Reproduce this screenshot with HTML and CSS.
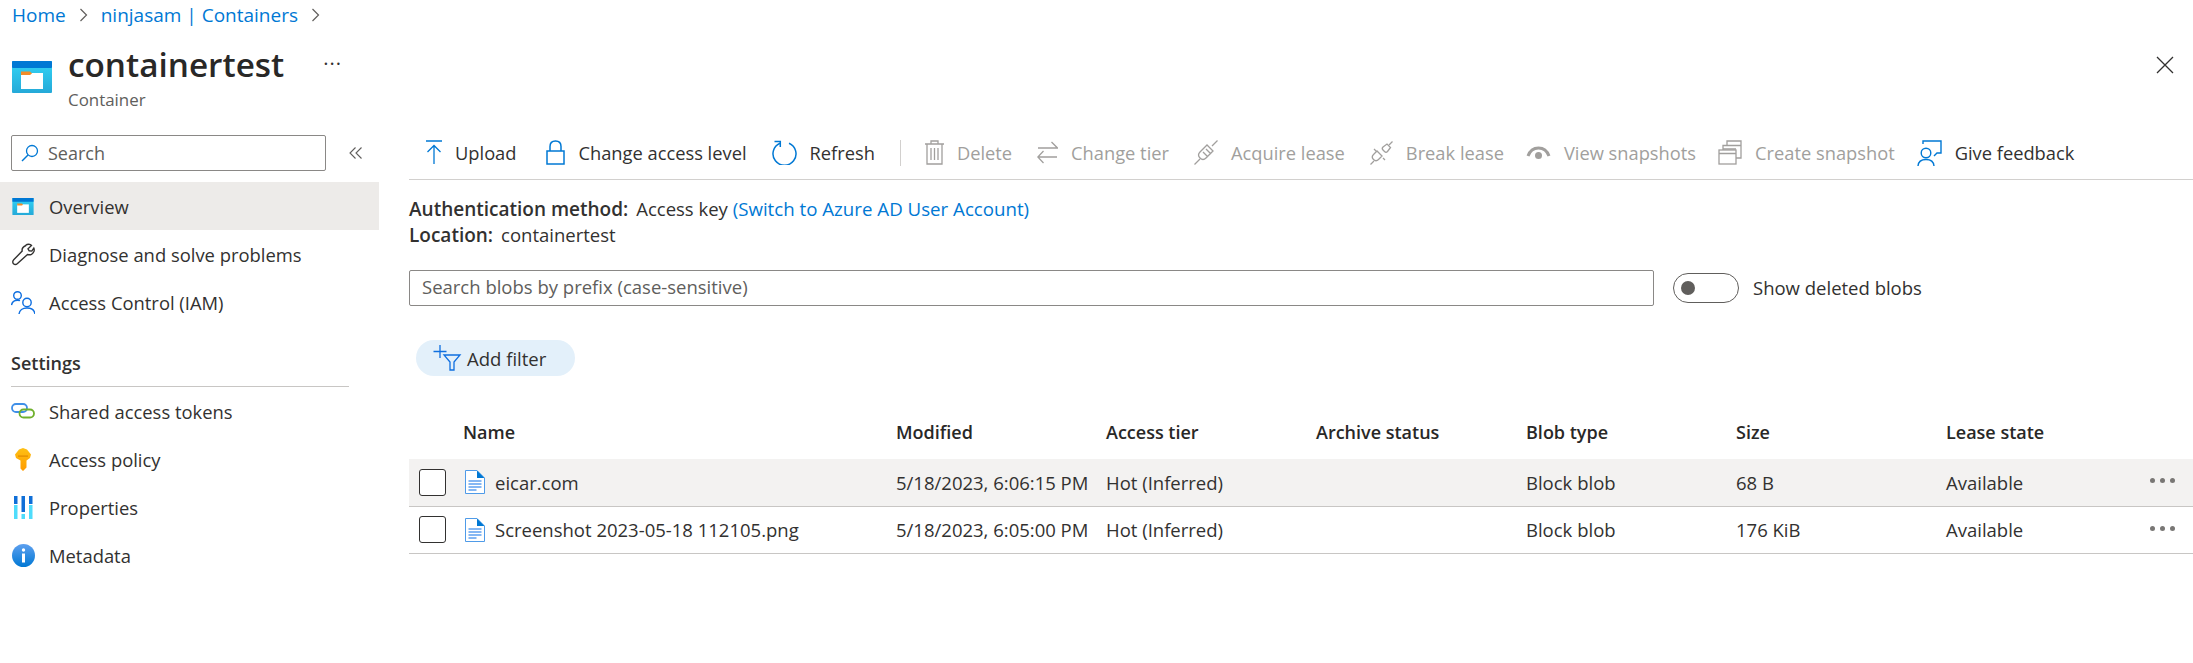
FILE: index.html
```html
<!DOCTYPE html>
<html lang="en">
  <head>
    <meta charset="utf-8" />
    <meta name="viewport" content="width=device-width, initial-scale=1" />
    <title>containertest</title>
    <link rel="stylesheet" href="styles.css">
  </head>
  <body>
    <svg class="sprite" width="0" height="0">
      <defs>
        <linearGradient id="cyan" x1="0" y1="0" x2="0" y2="1">
          <stop offset="0" stop-color="#32d4f5" />
          <stop offset="1" stop-color="#25a9d8" />
        </linearGradient>
        <linearGradient id="gold" x1="0" y1="0" x2="0" y2="1">
          <stop offset="0" stop-color="#fec014" />
          <stop offset="1" stop-color="#ff9b00" />
        </linearGradient>
        <linearGradient id="blueball" x1="0" y1="0" x2="0" y2="1">
          <stop offset="0" stop-color="#5ea0ef" />
          <stop offset="1" stop-color="#0078d4" />
        </linearGradient>
        <symbol id="i-container" viewBox="0 0 40 32">
          <rect y="0" width="40" height="32" rx="1" fill="url(#cyan)" />
          <rect y="0" width="40" height="7" rx="1" fill="#0078d4" />
          <rect x="9" y="12" width="22" height="16" fill="#fff" />
          <path d="M9 10.5h9l2 2-2 1.500H9z" fill="#f28c28" />
        </symbol>
        <symbol id="i-file" viewBox="0 0 20 24">
          <path d="M0.500 0.500H12l7.500 7.500v15.500H0.500z" fill="#fff" stroke="#4f9be8" />
          <path d="M12 0.500l7.500 7.500H12z" fill="#0078d4" />
          <path d="M3.500 11h13M3.500 14h13M3.500 17h13M3.500 20h8" stroke="#5ea0ef" stroke-width="1.300" />
        </symbol>
      </defs>
    </svg>

    <nav class="crumbs">
      <a href="#">Home</a>
      <svg class="crumb-sep" width="10" height="14" viewBox="0 0 10 14"><path d="M1.500 1l6 6-6 6" /></svg>
      <a href="#">ninjasam | Containers</a>
      <svg class="crumb-sep" width="10" height="14" viewBox="0 0 10 14"><path d="M1.500 1l6 6-6 6" /></svg>
    </nav>

    <header class="title-bar">
      <svg class="title-icon" width="40" height="32"><use href="#i-container" /></svg>
      <div class="title-text">
        <div class="title-row">
          <h1>containertest</h1>
          <span class="title-more">&middot;&middot;&middot;</span>
        </div>
        <p>Container</p>
      </div>
      <svg class="close" width="18" height="18" viewBox="0 0 18 18"><path d="M1 1l16 16M17 1L1 17" /></svg>
    </header>

    <div class="layout">
      <aside class="side">
        <div class="side-search">
          <div class="search-box">
            <svg width="18" height="18" viewBox="0 0 18 18"><circle cx="11" cy="7" r="5.500" fill="none" stroke="#0078d4" stroke-width="1.300" /><path d="M7 11l-6 6" stroke="#0078d4" stroke-width="1.500" /></svg>
            <span>Search</span>
          </div>
          <svg class="collapse" width="14" height="12" viewBox="0 0 14 12"><path d="M6.500 0.500L1 6l5.500 5.500M12.500 0.500L7 6l5.500 5.500" /></svg>
        </div>

        <a class="nav-item active" href="#">
          <span class="nav-icon"><svg width="22" height="17"><use href="#i-container" /></svg></span>Overview
        </a>
        <a class="nav-item" href="#">
          <span class="nav-icon">
            <svg width="24" height="24" viewBox="0 0 24 24" fill="none" stroke="#323130" stroke-width="1.400"><path d="M14.500 3.500c2-1.800 4.800-1.700 6 0l-3.500 3.300 1.200 2 2.600.300 2-3c1 2.200 0 5-2.300 6.200-1.500.7-2.800.6-4 .2L6.500 21.500c-1.300 1.200-3 1.200-4 .2s-1-2.700.2-3.900l8.500-8.700c-.5-2.200.5-4.300 3.800-5.600z" /></svg>
          </span>Diagnose and solve problems
        </a>
        <a class="nav-item" href="#">
          <span class="nav-icon">
            <svg width="24" height="24" viewBox="0 0 24 24" fill="none" stroke="#0f6fe0" stroke-width="1.400"><circle cx="6.500" cy="5.500" r="3.800" /><path d="M0.500 15c.6-3 2.800-4.800 6-4.800 1 0 1.800.2 2.500.5" /><circle cx="16" cy="12.500" r="4.200" /><path d="M8 24c.4-3.600 3.600-6 8-6s7.500 2.400 8 6" /></svg>
          </span>Access Control (IAM)
        </a>

        <h2 class="side-heading">Settings</h2>

        <a class="nav-item" href="#">
          <span class="nav-icon">
            <svg width="24" height="16" viewBox="0 0 24 16" fill="none" stroke-width="1.800"><rect x="1" y="1" width="15" height="8" rx="4" stroke="#3f8fe8" /><rect x="8.500" y="6.500" width="14.500" height="8" rx="4" stroke="#6fb02c" /></svg>
          </span>Shared access tokens
        </a>
        <a class="nav-item" href="#">
          <span class="nav-icon">
            <svg width="16" height="23" viewBox="0 0 16 23"><path d="M8 0l4 1.500 4 5-1 3.500-3.500 2.500v7L8 23l-2.500-2.500V12.500L1 10 0 6.500 4 1.500z" fill="url(#gold)" /><rect x="3" y="7.500" width="10" height="1.200" fill="#e08a00" /></svg>
          </span>Access policy
        </a>
        <a class="nav-item" href="#">
          <span class="nav-icon">
            <svg width="19" height="23" viewBox="0 0 19 23"><path d="M0 0h3.500v8H0zM7.500 0H11v16H7.500zM15 0h3.500v8H15z" fill="#0f6fd8" /><path d="M0 9h3.500v14H0zM7.500 18H11v5H7.500zM15 9h3.500v14H15z" fill="#4fdcfb" /></svg>
          </span>Properties
        </a>
        <a class="nav-item" href="#">
          <span class="nav-icon">
            <svg width="23" height="23" viewBox="0 0 23 23"><circle cx="11.500" cy="11.500" r="11.500" fill="url(#blueball)" /><circle cx="11.500" cy="6" r="1.700" fill="#fff" /><rect x="10" y="9.500" width="3" height="9" fill="#fff" /></svg>
          </span>Metadata
        </a>
      </aside>

      <main class="main">
        <div class="toolbar">
          <span class="tool wide">
            <svg width="16" height="25" viewBox="0 0 16 25" fill="none" stroke="#0078d4" stroke-width="1.300"><path d="M0 1h16M8 24V6M1.500 12L8 5.500l6.500 6.500" /></svg>Upload
          </span>
          <span class="tool">
            <svg width="19" height="25" viewBox="0 0 19 25" fill="none" stroke="#0078d4" stroke-width="1.500"><rect x="1" y="11" width="17" height="13" /><path d="M4 11V6.500C4 3 6.200 1 9.500 1S15 3 15 6.500V11" /></svg>Change access level
          </span>
          <span class="tool">
            <svg width="25" height="25" viewBox="0 0 25 25" fill="none" stroke="#0078d4" stroke-width="1.500"><path d="M8 3.200a11.500 11.500 0 1 0 9 0" /><path d="M2.500 1.500H8.300v5.500" /></svg>Refresh
          </span>
          <span class="tool-sep"></span>
          <span class="tool off">
            <svg width="19" height="25" viewBox="0 0 19 25" fill="none" stroke="#a19f9d" stroke-width="1.300"><path d="M0 4h19M6 4V1h7v3M2 4v20h15V4M6 8v12M9.500 8v12M13 8v12" /></svg>Delete
          </span>
          <span class="tool off">
            <svg width="21" height="23" viewBox="0 0 21 23" fill="none" stroke="#a19f9d" stroke-width="1.300"><path d="M1 7h19M14.500 1L20.500 7l-6 0M20 16H1M6.500 10L0.800 16l5.700 6" /></svg>Change tier
          </span>
          <span class="tool off">
            <svg width="24" height="25" viewBox="0 0 24 25" fill="none" stroke="#a19f9d" stroke-width="1.300"><path d="M0.500 24.500L6 19M23.500 0.500L18 6" /><path d="M6 12l7-7 6 6-7 7c-2 2-4 2-6 0s-2-4 0-6zM9 12l5 5M12 9l5 5" /></svg>Acquire lease
          </span>
          <span class="tool off tight">
            <svg width="23" height="24" viewBox="0 0 23 24" fill="none" stroke="#a19f9d" stroke-width="1.300"><path d="M0.500 23.500L4 20M22.500 0.500L19 4" /><path d="M7 10l-3.500 3.500c-1.500 1.500-1.500 3.500 0 5s3.500 1.500 5 0L12 15zM13 6l4-3 3.500 3.500-3 4c-1 1-2 1-3 0l-1.500-1.500c-1-1-1-2 0-3zM4 8l2 2M13 17l2 2" /></svg>Break lease
          </span>
          <span class="tool off tight">
            <svg width="25" height="15" viewBox="0 0 25 15"><path d="M2 11C4 5.500 8 3 12.500 3S21 5.500 23 11" fill="none" stroke="#a19f9d" stroke-width="3" /><circle cx="12.500" cy="10.500" r="3.500" fill="#a19f9d" /></svg>View snapshots
          </span>
          <span class="tool off tight">
            <svg width="24" height="25" viewBox="0 0 24 25" fill="none" stroke="#a19f9d" stroke-width="1.300"><rect x="1" y="10" width="17" height="14" /><path d="M1 13.500h17M5 10V5.500h18V18h-5M5 9h13M9 5.500V1h14v4.500" /></svg>Create snapshot
          </span>
          <span class="tool on">
            <svg width="25" height="26" viewBox="0 0 25 26" fill="none" stroke="#0078d4" stroke-width="1.400"><circle cx="9" cy="13" r="4.800" /><path d="M1 26c.3-4 3.500-6.500 8-6.500s7.700 2.500 8 6.500M6 4V1h18v12h-4l-3 3" /></svg>Give feedback
          </span>
        </div>

        <div class="info">
          <div><b>Authentication method:</b>Access key <a href="#">(Switch to Azure AD User Account)</a></div>
          <div><b>Location:</b>containertest</div>
        </div>

        <div class="search-row">
          <div class="prefix-box">Search blobs by prefix (case-sensitive)</div>
          <span class="toggle"><span class="knob"></span></span>
          <span class="toggle-label">Show deleted blobs</span>
        </div>

        <button class="add-filter">
          <svg width="30" height="26" viewBox="0 0 30 26" fill="none" stroke="#0f6fe0" stroke-width="1.300"><path d="M8 0v13M1.500 6.500h13M12 10h16l-6 7v8h-4v-8z" /></svg>
          Add filter
        </button>

        <div class="blobs">
          <div class="blob-head">
            <span></span>
            <span>Name</span>
            <span>Modified</span>
            <span>Access tier</span>
            <span>Archive status</span>
            <span>Blob type</span>
            <span>Size</span>
            <span>Lease state</span>
          </div>
          <div class="blob-row hover">
            <span class="check"></span>
            <span class="blob-name"><svg width="20" height="24"><use href="#i-file" /></svg>eicar.com</span>
            <span>5/18/2023, 6:06:15 PM</span>
            <span>Hot (Inferred)</span>
            <span></span>
            <span>Block blob</span>
            <span>68 B</span>
            <span class="last">Available<i class="dots"><em></em><em></em><em></em></i></span>
          </div>
          <div class="blob-row">
            <span class="check"></span>
            <span class="blob-name"><svg width="20" height="24"><use href="#i-file" /></svg>Screenshot 2023-05-18 112105.png</span>
            <span>5/18/2023, 6:05:00 PM</span>
            <span>Hot (Inferred)</span>
            <span></span>
            <span>Block blob</span>
            <span>176 KiB</span>
            <span class="last">Available<i class="dots"><em></em><em></em><em></em></i></span>
          </div>
        </div>
      </main>
    </div>
  </body>
</html>
```

FILE: styles.css
```css
* {
  box-sizing: border-box;
}

body {
  margin: 0;
  height: 663px;
  overflow: hidden;
  background-color: #ffffff;
  color: #323130;
  font-family: "Open Sans", "Noto Sans", sans-serif;
  font-size: 18.5px;
}

a {
  color: #0078d4;
  text-decoration: none;
}

.sprite {
  position: absolute;
}

.crumbs {
  display: flex;
  align-items: center;
  height: 30px;
  padding-left: 12px;
  font-size: 19px;
}

.crumb-sep {
  margin: 0 12px 0 13px;
  fill: none;
  stroke: #605e5c;
  stroke-width: 1.2;
}

.title-bar {
  display: flex;
  align-items: flex-start;
  height: 84px;
  padding: 14px 19px 0 12px;
}

.title-icon {
  margin: 17px 16px 0 0;
}

.title-text {
  flex: 1;
}

.title-row {
  display: flex;
  align-items: flex-start;
}

.title-text h1 {
  margin: 0;
  font-size: 33.3px;
  line-height: 40px;
  font-weight: 600;
  color: #292827;
}

.title-more {
  margin: 0 0 0 39px;
  font-size: 20px;
  line-height: 40px;
  letter-spacing: 1px;
}

.title-text p {
  margin: 5px 0 0;
  font-size: 16.900px;
  line-height: 22px;
  color: #605e5c;
}

.close {
  margin-top: 12px;
  fill: none;
  stroke: #323130;
  stroke-width: 1.3;
}

.layout {
  display: flex;
}

.side {
  width: 379px;
  flex: none;
}

.side-search {
  display: flex;
  align-items: flex-start;
  height: 68px;
  padding: 21px 0 0 11px;
}

.search-box {
  display: flex;
  align-items: center;
  width: 315px;
  height: 36px;
  padding-left: 9px;
  border: 1px solid #8a8886;
  border-radius: 2px;
  font-size: 18px;
  color: #605e5c;
}

.search-box svg {
  margin-right: 9px;
}

.collapse {
  margin: 12px 0 0 23px;
  fill: none;
  stroke: #605e5c;
  stroke-width: 1.1;
}

.nav-item {
  display: flex;
  align-items: center;
  height: 48px;
  padding-left: 11px;
  color: #323130;
  font-size: 18.4px;
}

.nav-item.active {
  background-color: #edebe9;
}

.nav-icon {
  display: flex;
  justify-content: center;
  width: 24px;
  margin-right: 14px;
}

.side-heading {
  margin: 23px 30px 0 11px;
  padding-bottom: 9px;
  border-bottom: 1px solid #c8c6c4;
  font-size: 18px;
  line-height: 28px;
  font-weight: 600;
}

.main {
  flex: 1;
  min-width: 0;
  padding-left: 30px;
}

.toolbar {
  display: flex;
  align-items: center;
  height: 66px;
  padding: 12px 0 0 17px;
  border-bottom: 1px solid #d2d0ce;
  font-size: 18.3px;
}

.tool {
  display: flex;
  align-items: center;
  gap: 13px;
  margin-right: 25px;
  white-space: nowrap;
}

.tool.wide {
  margin-right: 30px;
}

.tool.tight {
  margin-right: 22px;
}

.tool.off {
  color: #a19f9d;
}

.tool-sep {
  width: 1px;
  height: 26px;
  margin-right: 24px;
  background-color: #d2d0ce;
}

.info {
  padding-top: 16px;
  line-height: 26px;
}

.info b {
  margin-right: 8px;
  font-size: 19px;
  font-weight: 600;
}

.info a {
  font-size: 18.700px;
}

.search-row {
  display: flex;
  align-items: center;
  margin-top: 22px;
}

.prefix-box {
  width: 1245px;
  height: 36px;
  padding-left: 12px;
  border: 1px solid #8a8886;
  border-radius: 2px;
  line-height: 32px;
  color: #605e5c;
}

.toggle {
  display: flex;
  align-items: center;
  width: 66px;
  height: 30px;
  margin: 0 14px 0 19px;
  padding-left: 7px;
  border: 1px solid #605e5c;
  border-radius: 15px;
}

.knob {
  width: 14px;
  height: 14px;
  border-radius: 50%;
  background-color: #605e5c;
}

.toggle-label {
  padding-bottom: 2px;
}

.add-filter {
  display: flex;
  align-items: center;
  width: 159px;
  height: 36px;
  margin: 34px 0 0 7px;
  padding: 0 0 0 16px;
  border: 0;
  border-radius: 18px;
  background-color: #e3f0fa;
  color: #323130;
  font: inherit;
}

.add-filter svg {
  margin: 0 5px 0 0;
}

.blobs {
  margin-top: 33px;
}

.blob-head,
.blob-row {
  display: grid;
  grid-template-columns: 54px 433px 210px 210px 210px 210px 210px 1fr;
  align-items: center;
}

.blob-head {
  height: 50px;
  padding-bottom: 5px;
  font-size: 18px;
  font-weight: 600;
  color: #292827;
}

.blob-row {
  height: 47.6px;
  border-bottom: 1px solid #c8c6c4;
}

.blob-row.hover {
  background-color: #f3f2f1;
}

.check {
  width: 27px;
  height: 27px;
  margin-left: 10px;
  border: 1px solid #323130;
  border-radius: 3px;
  background-color: #ffffff;
}

.blob-name {
  display: flex;
  align-items: center;
  gap: 10px;
  margin-left: 2px;
}

.last {
  display: flex;
  align-items: center;
  justify-content: space-between;
  padding-right: 18px;
}

.dots {
  display: flex;
  gap: 5px;
  margin-top: -3px;
}

.dots em {
  width: 5px;
  height: 5px;
  border-radius: 50%;
  background-color: #797775;
}
```
